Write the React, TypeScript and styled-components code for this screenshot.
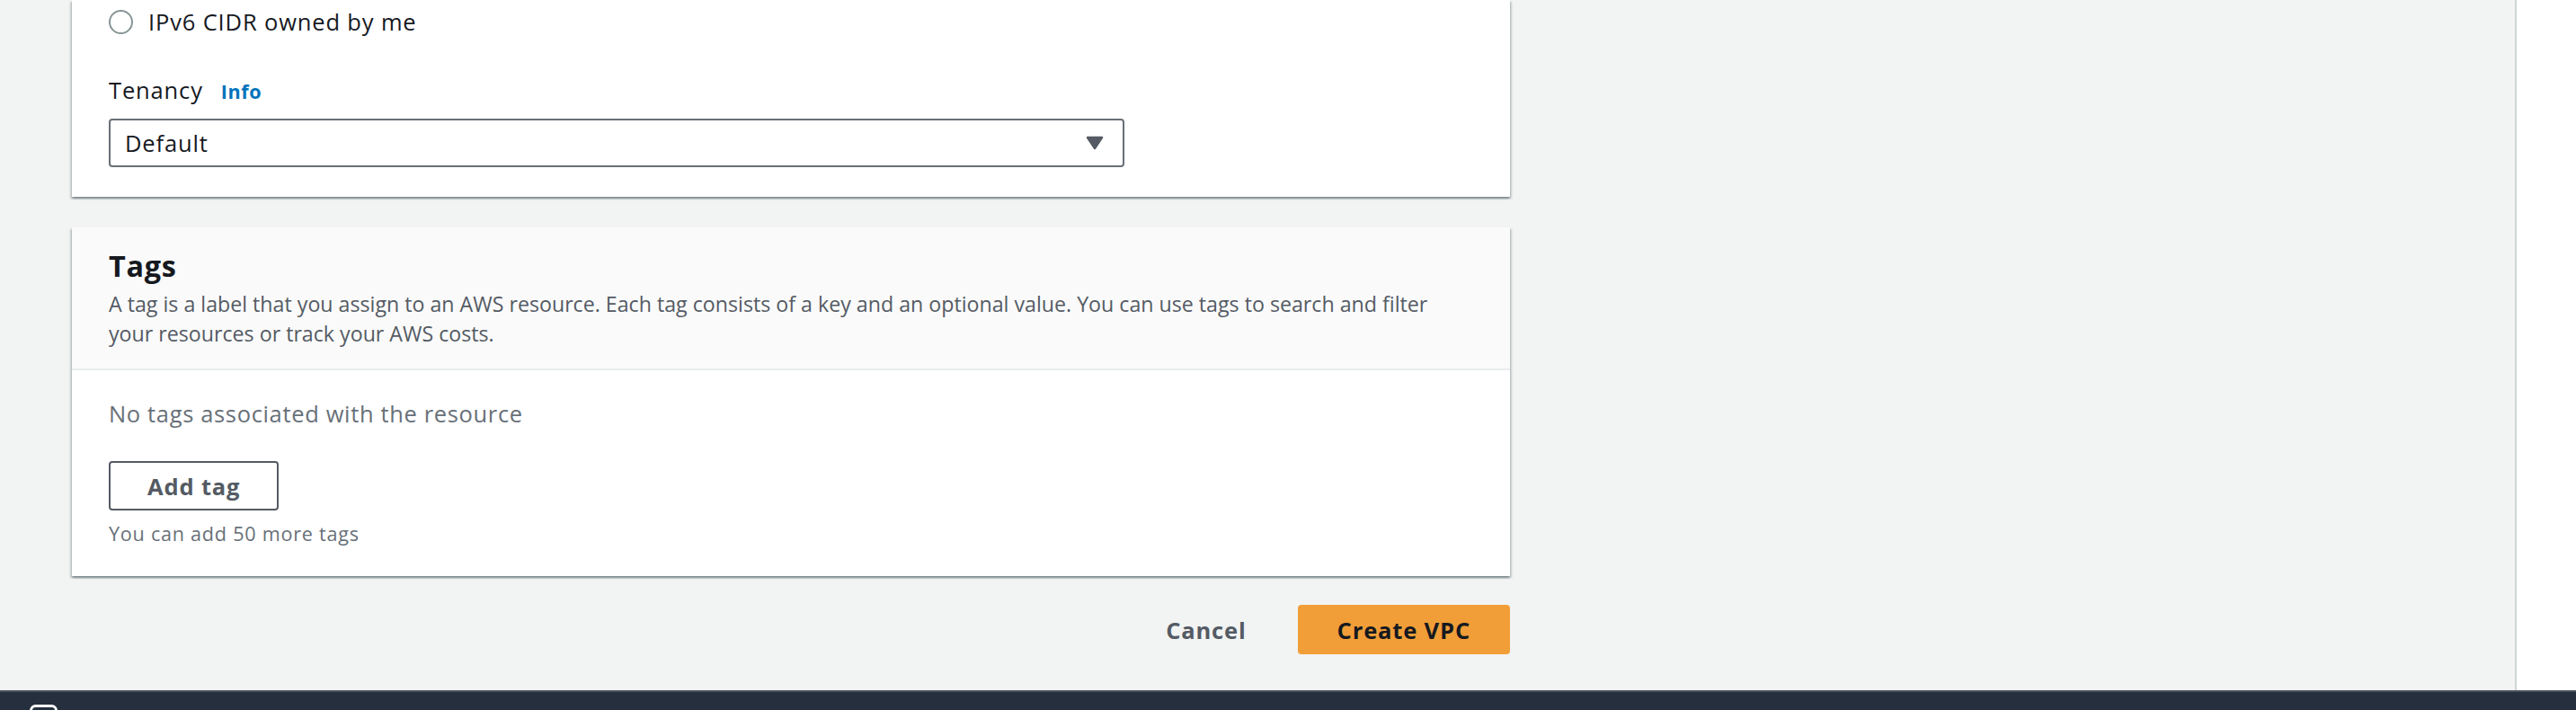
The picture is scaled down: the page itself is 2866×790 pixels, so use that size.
import React from "react";
import styled, { createGlobalStyle } from "styled-components";

const GlobalStyle = createGlobalStyle`
  html, body {
    margin: 0;
    padding: 0;
    background: #f2f3f3;
    overflow: hidden;
  }
  body {
    font-family: "Open Sans", "Liberation Sans", Arial, sans-serif;
    color: #16191f;
    letter-spacing: 0.85px;
  }
  * { box-sizing: border-box; }
`;

const Page = styled.div`
  width: 2866px;
  height: 790px;
  display: flex;
  flex-direction: column;
  overflow: hidden;
`;

const Workspace = styled.div`
  display: flex;
  height: 768px;
  flex-shrink: 0;
`;

const Main = styled.main`
  flex: 1;
  padding-left: 80px;
`;

const Column = styled.div`
  width: 1600px;
  display: flex;
  flex-direction: column;
`;

const SidePanel = styled.aside`
  width: 68px;
  background: #ffffff;
  border-left: 2px solid #d0d5d5;
`;

const Card = styled.section<{ $gapTop?: number }>`
  background: #ffffff;
  margin-top: ${(p) => p.$gapTop ?? 0}px;
  box-shadow: 0 2px 2px 0 rgba(0, 28, 36, 0.3), 2px 2px 2px 0 rgba(0, 28, 36, 0.15),
    -2px 2px 2px 0 rgba(0, 28, 36, 0.15);
`;

const CardBody = styled.div<{ $pt: number; $pb: number }>`
  padding: ${(p) => p.$pt}px 41px ${(p) => p.$pb}px 41px;
  display: flex;
  flex-direction: column;
  align-items: flex-start;
`;

const RadioRow = styled.label`
  display: flex;
  align-items: center;
  gap: 17px;
  height: 36px;
  font-size: 25.5px;
  line-height: 36px;
  color: #16191f;
`;

const RadioCircle = styled.span`
  width: 27px;
  height: 27px;
  border-radius: 50%;
  border: 2px solid #879596;
  background: #fff;
  flex-shrink: 0;
`;

const FieldLabel = styled.div`
  margin-top: 40px;
  display: flex;
  align-items: baseline;
  gap: 20px;
  font-size: 25.5px;
  line-height: 36px;
  color: #16191f;
`;

const InfoLink = styled.span`
  font-size: 21.6px;
  font-weight: 700;
  letter-spacing: 0.6px;
  color: #0073bb;
`;

const Select = styled.div`
  margin-top: 12px;
  width: 1130px;
  height: 54px;
  border: 2px solid #687078;
  border-radius: 4px;
  display: flex;
  align-items: center;
  justify-content: space-between;
  padding: 0 21px 0 16px;
  font-size: 25.5px;
  color: #16191f;
`;

const CardHeader = styled.header`
  background: #fafafa;
  border-bottom: 2px solid #eaeded;
  padding: 22px 41px 23px 41px;
`;

const Heading = styled.h2`
  margin: 0;
  font-size: 32.4px;
  line-height: 40px;
  font-weight: 700;
  letter-spacing: 0.7px;
  color: #16191f;
`;

const Description = styled.p`
  margin: 7px 0 0 0;
  font-size: 23.2px;
  line-height: 32.6px;
  letter-spacing: 0;
  color: #545b64;
`;

const EmptyText = styled.div`
  font-size: 25.5px;
  line-height: 36px;
  letter-spacing: 0.65px;
  color: #687078;
`;

const OutlineButton = styled.button`
  margin-top: 35px;
  height: 55px;
  padding: 0 41px;
  border: 2px solid #545b64;
  border-radius: 4px;
  background: #ffffff;
  font-family: inherit;
  font-size: 25.5px;
  font-weight: 700;
  letter-spacing: 0.85px;
  color: #545b64;
`;

const Hint = styled.div`
  margin-top: 11px;
  font-size: 21.6px;
  line-height: 29px;
  letter-spacing: 0.75px;
  color: #687078;
`;

const Actions = styled.div`
  margin-top: 32px;
  display: flex;
  justify-content: flex-end;
  align-items: center;
  gap: 17px;
`;

const ActionButton = styled.button<{ $primary?: boolean }>`
  height: 55px;
  padding: 0 ${(p) => (p.$primary ? 44 : 40)}px;
  border: none;
  border-radius: 4px;
  background: ${(p) => (p.$primary ? "#f19e38" : "transparent")};
  font-family: inherit;
  font-size: 25.5px;
  font-weight: 700;
  letter-spacing: 0.85px;
  color: ${(p) => (p.$primary ? "#16191f" : "#545b64")};
`;

const Footer = styled.footer`
  height: 72px;
  flex-shrink: 0;
  background: #252f3e;
  border-top: 2px solid #4b535d;
  display: flex;
  align-items: flex-start;
  padding: 14px 0 0 33px;
  gap: 184px;
`;

const FooterLink = styled.span`
  font-size: 24px;
  line-height: 36px;
  margin-top: 4px;
  color: #d5dbdb;
`;

const Caret = () => (
  <svg width="20" height="16" viewBox="0 0 20 16">
    <path d="M2 2 H18 L10 14 Z" fill="#545b64" stroke="#545b64" strokeWidth="2.5" strokeLinejoin="round" />
  </svg>
);

const ShellIcon = () => (
  <svg width="31" height="30" viewBox="0 0 31 30">
    <rect x="1.5" y="1.5" width="28" height="26" rx="5" fill="none" stroke="#ffffff" strokeWidth="3" />
  </svg>
);

export default function App() {
  return (
    <>
      <GlobalStyle />
      <Page>
        <Workspace>
          <Main>
            <Column>
              <Card>
                <CardBody $pt={6} $pb={33}>
                  <RadioRow>
                    <RadioCircle />
                    IPv6 CIDR owned by me
                  </RadioRow>
                  <FieldLabel>
                    Tenancy <InfoLink>Info</InfoLink>
                  </FieldLabel>
                  <Select>
                    Default
                    <Caret />
                  </Select>
                </CardBody>
              </Card>
              <Card $gapTop={34}>
                <CardHeader>
                  <Heading>Tags</Heading>
                  <Description>
                    A tag is a label that you assign to an AWS resource. Each tag consists of a key and an optional
                    value. You can use tags to search and filter your resources or track your AWS costs.
                  </Description>
                </CardHeader>
                <CardBody $pt={30} $pb={33}>
                  <EmptyText>No tags associated with the resource</EmptyText>
                  <OutlineButton>Add tag</OutlineButton>
                  <Hint>You can add 50 more tags</Hint>
                </CardBody>
              </Card>
              <Actions>
                <ActionButton>Cancel</ActionButton>
                <ActionButton $primary>Create VPC</ActionButton>
              </Actions>
            </Column>
          </Main>
          <SidePanel />
        </Workspace>
        <Footer>
          <ShellIcon />
          <FooterLink>Feedback</FooterLink>
        </Footer>
      </Page>
    </>
  );
}
